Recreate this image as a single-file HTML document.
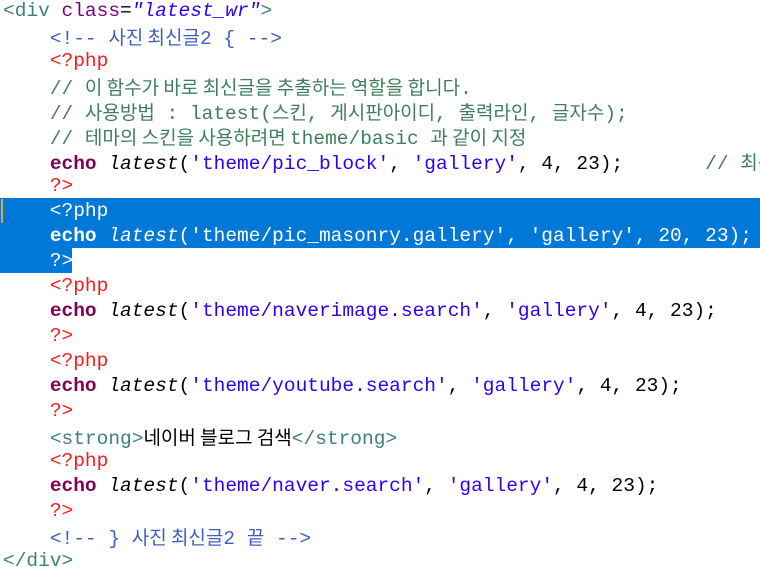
<!DOCTYPE html>
<html><head><meta charset="utf-8"><style>
html,body{margin:0;padding:0;background:#fff;width:760px;height:584px;overflow:hidden}
.c{position:absolute;top:-1px;left:3px;font-family:"Liberation Mono","Noto Sans CJK KR",monospace;font-size:19.5px;color:#000}
.l{height:25px;line-height:25px;white-space:pre;overflow:hidden}
.k{font-family:"Noto Sans CJK KR","NanumGothic",sans-serif;font-size:19px}
.t{color:#3f7f7f}.a{color:#7f007f}.v{color:#2a00ff;font-style:italic}
.h{color:#3f5fbf}.p{color:#ff1a1a}.pc{color:#3f7f5f}.e{color:#7f0055;font-weight:bold}
.i{font-style:italic}.s{color:#2a00ff}
.sel{position:absolute;background:#0078d7}
.sel2{color:#fff}
</style></head><body>
<div class="sel" style="left:0;top:198px;width:760px;height:50px"></div>
<div class="sel" style="left:0;top:248px;width:72px;height:25px"></div>
<div style="position:absolute;left:1px;top:199px;width:2px;height:24px;background:#e8a040"></div>
<div class="c"><div class="l"><span class="t">&lt;div</span> <span class="a">class</span>=<span class="v">"latest_wr"</span><span class="t">&gt;</span></div><div class="l">    <span class="h">&lt;!-- <span class="k">사진 최신글</span>2 { --&gt;</span></div><div class="l">    <span class="p">&lt;?php</span></div><div class="l">    <span class="pc">// <span class="k">이 함수가 바로 최신글을 추출하는 역할을 합니다</span>.</span></div><div class="l">    <span class="pc">// <span class="k">사용방법</span> : latest(<span class="k">스킨</span>, <span class="k">게시판아이디</span>, <span class="k">출력라인</span>, <span class="k">글자수</span>);</span></div><div class="l">    <span class="pc">// <span class="k">테마의 스킨을 사용하려면 </span>theme/basic <span class="k">과 같이 지정</span></span></div><div class="l">    <span class="e">echo</span> <span class="i">latest</span>(<span class="s">'theme/pic_block'</span>, <span class="s">'gallery'</span>, 4, 23);       <span class="pc">// <span class="k">최신글</span></span></div><div class="l">    <span class="p">?&gt;</span></div><div class="l sel2">    &lt;?php</div><div class="l sel2">    <b>echo</b> <span class="i">latest</span>('theme/pic_masonry.gallery', 'gallery', 20, 23);</div><div class="l sel2">    ?&gt;</div><div class="l">    <span class="p">&lt;?php</span></div><div class="l">    <span class="e">echo</span> <span class="i">latest</span>(<span class="s">'theme/naverimage.search'</span>, <span class="s">'gallery'</span>, 4, 23);</div><div class="l">    <span class="p">?&gt;</span></div><div class="l">    <span class="p">&lt;?php</span></div><div class="l">    <span class="e">echo</span> <span class="i">latest</span>(<span class="s">'theme/youtube.search'</span>, <span class="s">'gallery'</span>, 4, 23);</div><div class="l">    <span class="p">?&gt;</span></div><div class="l">    <span class="t">&lt;strong&gt;</span><span class="k">네이버 블로그 검색</span><span class="t">&lt;/strong&gt;</span></div><div class="l">    <span class="p">&lt;?php</span></div><div class="l">    <span class="e">echo</span> <span class="i">latest</span>(<span class="s">'theme/naver.search'</span>, <span class="s">'gallery'</span>, 4, 23);</div><div class="l">    <span class="p">?&gt;</span></div><div class="l">    <span class="h">&lt;!-- } <span class="k">사진 최신글</span>2 <span class="k">끝</span> --&gt;</span></div><div class="l"><span class="t">&lt;/div&gt;</span></div></div>
</body></html>
